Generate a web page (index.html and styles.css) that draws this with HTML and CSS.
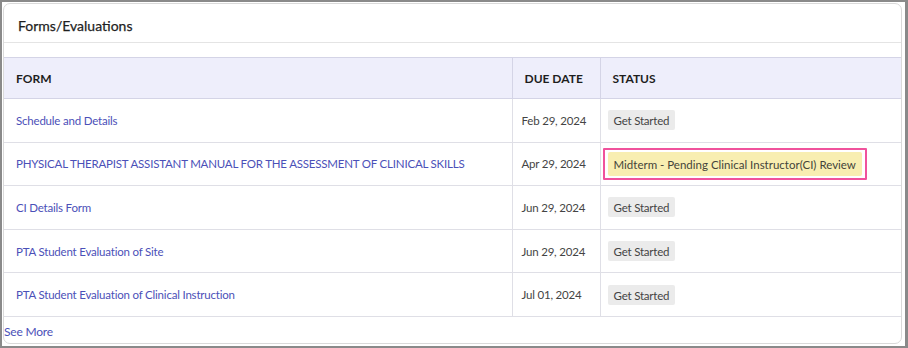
FILE: index.html
```html
<!DOCTYPE html>
<html>
<head>
<meta charset="utf-8">
<link rel="stylesheet" href="styles.css">
</head>
<body>
<div class="frame">
  <div class="card">
    <div class="card-title">Forms/Evaluations</div>
    <div class="spacer"></div>
    <table class="forms">
      <colgroup>
        <col class="col-form">
        <col class="col-date">
        <col class="col-status">
      </colgroup>
      <thead>
        <tr>
          <th>FORM</th>
          <th>DUE DATE</th>
          <th>STATUS</th>
        </tr>
      </thead>
      <tbody>
        <tr>
          <td><a href="#">Schedule and Details</a></td>
          <td class="c-date">Feb 29, 2024</td>
          <td class="c-status"><span class="badge">Get Started</span></td>
        </tr>
        <tr>
          <td><a href="#">PHYSICAL THERAPIST ASSISTANT MANUAL FOR THE ASSESSMENT OF CLINICAL SKILLS</a></td>
          <td class="c-date">Apr 29, 2024</td>
          <td class="c-status"><span class="highlight"><span class="badge badge-pending">Midterm - Pending Clinical Instructor(CI) Review</span></span></td>
        </tr>
        <tr>
          <td><a href="#">CI Details Form</a></td>
          <td class="c-date">Jun 29, 2024</td>
          <td class="c-status"><span class="badge">Get Started</span></td>
        </tr>
        <tr>
          <td><a href="#">PTA Student Evaluation of Site</a></td>
          <td class="c-date">Jun 29, 2024</td>
          <td class="c-status"><span class="badge">Get Started</span></td>
        </tr>
        <tr>
          <td><a href="#">PTA Student Evaluation of Clinical Instruction</a></td>
          <td class="c-date">Jul 01, 2024</td>
          <td class="c-status"><span class="badge">Get Started</span></td>
        </tr>
      </tbody>
    </table>
    <a class="see-more" href="#">See More</a>
  </div>
</div>
</body>
</html>
```

FILE: styles.css
```css
* { box-sizing: border-box; }
html, body { margin: 0; padding: 0; background: #fff; }
body {
  font-family: Lato, Roboto, sans-serif;
  color: #333;
}
.frame {
  width: 908px;
  height: 348px;
  border: 2px solid #8a8a8a;
  border-right-width: 3px;
  padding: 1px 3px 2px 1px;
}
.card {
  height: 100%;
  border: 1px solid #dadada;
  border-radius: 7px;
  overflow: hidden;
}
.card-title {
  height: 39px;
  padding: 14px 0 0 14px;
  font-size: 14px;
  font-weight: 400;
  color: #1f1f1f;
  border-bottom: 1px solid #e4e4e4;
  line-height: 16px;
  -webkit-text-stroke: 0.25px #1f1f1f;
}
.spacer { height: 14px; }
.forms {
  width: 100%;
  table-layout: fixed;
  border-collapse: collapse;
  font-size: 11.5px;
  letter-spacing: -0.2px;
}
.col-form { width: 508px; }
.col-date { width: 88px; }
.forms th, .forms td {
  border: 1px solid #dfdfe6;
  text-align: left;
  vertical-align: middle;
  padding: 0 12px;
  white-space: nowrap;
}
.forms tr > :first-child { border-left: none; }
.forms tr > :last-child { border-right: none; }
.forms th {
  background: #eeeefb;
  height: 41px;
  font-weight: 700;
  color: #1e1e1e;
  font-size: 12px;
  letter-spacing: 0;
  border-color: #d4d4e6;
}
.forms td { height: 43.6px; color: #444; }
.forms td.c-date { padding-left: 9px; }
.forms td.c-status { padding-left: 7px; }
.forms a {
  color: #4b50b8;
  text-decoration: none;
}
.badge {
  display: inline-block;
  background: #ebebeb;
  color: #444;
  padding: 3px 6px 2px;
  border-radius: 2px;
  line-height: 15px;
}
.highlight {
  display: inline-block;
  border: 2px solid #f0529c;
  padding: 2px 3px;
  border-radius: 1px;
  margin-left: -5px;
}
.badge-pending {
  background: #f8eeb1;
  color: #44443a;
  padding: 5px 6px 4px;
  letter-spacing: 0;
}
.see-more {
  display: block;
  margin-top: 7px;
  font-size: 12px;
  line-height: 16px;
  letter-spacing: -0.2px;
  color: #4b50b8;
  text-decoration: none;
}
```
